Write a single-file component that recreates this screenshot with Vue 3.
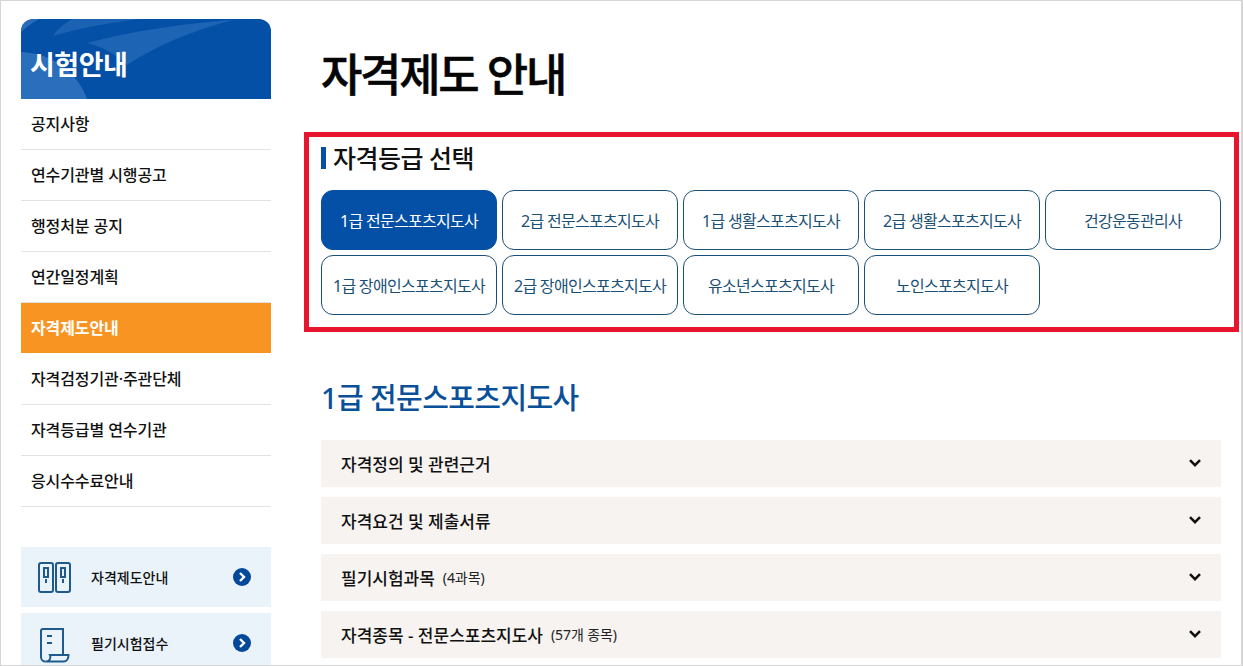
<script setup>
const menu = [
  { label: '공지사항' },
  { label: '연수기관별 시행공고' },
  { label: '행정처분 공지' },
  { label: '연간일정계획' },
  { label: '자격제도안내', active: true },
  { label: '자격검정기관·주관단체' },
  { label: '자격등급별 연수기관' },
  { label: '응시수수료안내' },
]
const grades = [
  { label: '1급 전문스포츠지도사', active: true },
  { label: '2급 전문스포츠지도사' },
  { label: '1급 생활스포츠지도사' },
  { label: '2급 생활스포츠지도사' },
  { label: '건강운동관리사' },
  { label: '1급 장애인스포츠지도사' },
  { label: '2급 장애인스포츠지도사' },
  { label: '유소년스포츠지도사' },
  { label: '노인스포츠지도사' },
]
const rows = [
  { label: '자격정의 및 관련근거' },
  { label: '자격요건 및 제출서류' },
  { label: '필기시험과목', note: '(4과목)' },
  { label: '자격종목 - 전문스포츠지도사', note: '(57개 종목)' },
]
</script>

<template>
  <div class="frame">
    <aside class="side">
      <div class="side-head">
        <svg class="swoosh" viewBox="0 0 250 80" preserveAspectRatio="none" aria-hidden="true">
          <path d="M0 13 C 6 8 12 3 18 0 L 12 0 Q 2 2 0 10 Z" fill="#2a6cba" />
          <path d="M32 17 C 36 10 44 4 52 0 L 118 0 C 88 4 58 9 32 17 Z" fill="#1c62b3" />
          <path d="M66 24 C 110 12 165 4 212 1 C 170 12 135 27 106 46 C 96 36 82 28 66 24 Z" fill="#1e64b4" />
          <path d="M0 33 C 30 34 56 52 66 80 L 0 80 Z" fill="#2b6ebc" />
        </svg>
        <h2 class="side-title">시험안내</h2>
      </div>
      <ul class="menu">
        <li v-for="item in menu" :key="item.label" class="menu-item" :class="{ active: item.active }">{{ item.label }}</li>
      </ul>
      <div class="cards">
        <div class="card">
          <svg class="card-icon" viewBox="0 0 34 40" aria-hidden="true">
            <g fill="none" stroke="#1f5a8c" stroke-width="2">
              <rect x="1" y="6" width="14" height="29" rx="2" />
              <rect x="18" y="6" width="14" height="29" rx="2" />
              <rect x="6" y="11" width="4" height="9" />
              <rect x="23" y="11" width="4" height="9" />
              <path d="M8 22v4M25 22v4" />
            </g>
          </svg>
          <span class="card-label">자격제도안내</span>
          <svg class="card-arrow" viewBox="0 0 18 18" aria-hidden="true">
            <circle cx="9" cy="9" r="9" fill="#04489a" />
            <path d="M7 5l4 4-4 4" fill="none" stroke="#fff" stroke-width="2.4" />
          </svg>
        </div>
        <div class="card">
          <svg class="card-icon" viewBox="0 0 34 40" aria-hidden="true">
            <g fill="none" stroke="#1f5a8c" stroke-width="2">
              <path d="M3 8a2 2 0 0 1 2-2H25V31" />
              <path d="M3 8V34a4.5 4.5 0 0 0 4.5 4.5" />
              <path d="M7.500 38.500a4.500 4.500 0 0 0 4.500-6.500H30.500c0 3-1.500 6.500-5 6.500z" />
              <path d="M9 13h5M9 20h5" />
            </g>
          </svg>
          <span class="card-label">필기시험접수</span>
          <svg class="card-arrow" viewBox="0 0 18 18" aria-hidden="true">
            <circle cx="9" cy="9" r="9" fill="#04489a" />
            <path d="M7 5l4 4-4 4" fill="none" stroke="#fff" stroke-width="2.4" />
          </svg>
        </div>
      </div>
    </aside>

    <main class="main">
      <h1 class="title">자격제도 안내</h1>
      <section class="select-box">
        <h3 class="select-title">자격등급 선택</h3>
        <div class="grade-grid">
          <div v-for="g in grades" :key="g.label" class="grade" :class="{ active: g.active }">{{ g.label }}</div>
        </div>
      </section>
      <h2 class="sub-title">1급 전문스포츠지도사</h2>
      <div class="rows">
        <div v-for="r in rows" :key="r.label" class="row">
          <span class="row-label">{{ r.label }}</span>
          <span v-if="r.note" class="row-note">{{ r.note }}</span>
          <svg class="chevron" viewBox="0 0 12 8" aria-hidden="true">
            <path d="M1 1.200l5 5 5-5" fill="none" stroke="#111" stroke-width="2.500" />
          </svg>
        </div>
      </div>
    </main>
  </div>
</template>

<style>
html, body { margin: 0; background: #fff; overflow: hidden; }
</style>

<style scoped>
.frame {
  box-sizing: border-box;
  width: 1243px;
  height: 666px;
  border: 1px solid #d6d6d6;
  border-right-width: 2px;
  padding: 18px 0 0 20px;
  display: flex;
  overflow: hidden;
  background: #fff;
  font-family: "Noto Sans", "Noto Sans CJK KR", sans-serif;
  color: #111;
}
.side { width: 250px; flex: none; }
.side-head {
  position: relative;
  height: 80px;
  background: #0450a6;
  border-radius: 12px 12px 0 0;
  overflow: hidden;
}
.swoosh { position: absolute; inset: 0; width: 100%; height: 100%; }
.side-title {
  position: relative;
  margin: 0;
  padding: 26px 0 0 9px;
  font-size: 27px;
  line-height: 40px;
  font-weight: 700;
  letter-spacing: -0.5px;
  color: #fff;
}
.menu { list-style: none; margin: 0; padding: 0; }
.menu-item {
  box-sizing: border-box;
  height: 51px;
  padding-left: 10px;
  border-bottom: 1px solid #e2e2e2;
  font-size: 16px;
  line-height: 51px;
  font-weight: 500;
  letter-spacing: -0.1px;
  color: #111;
}
.menu-item.active { background: #f89522; color: #fff; border-bottom-color: #fff; font-weight: 700; }
.cards { margin-top: 40px; display: flex; flex-direction: column; gap: 6px; }
.card {
  flex: none;
  height: 60px;
  display: flex;
  align-items: center;
  background: #e9f3f9;
  padding: 0 20px 0 17px;
}
.card-icon { width: 34px; height: 40px; flex: none; }
.card-label {
  margin-left: 19px;
  flex: 1;
  font-size: 14px;
  letter-spacing: 0;
  font-weight: 500;
}
.card-arrow { width: 18px; height: 18px; flex: none; }

.main { width: 900px; margin-left: 50px; flex: none; }
.title {
  margin: 22px 0 0;
  font-size: 45px;
  line-height: 68px;
  font-weight: 500;
  letter-spacing: -2.3px;
  -webkit-text-stroke: 0.5px #050505;
  color: #050505;
}
.select-box {
  box-sizing: border-box;
  width: 935px;
  height: 200px;
  margin: 23px 0 0 -17px;
  padding: 5px 12px 0 12px;
  border: 5px solid #e8152f;
}
.select-title {
  margin: 0;
  padding-left: 12px;
  position: relative;
  font-size: 25px;
  line-height: 32px;
  font-weight: 500;
  letter-spacing: -0.5px;
  color: #111;
}
.select-title::before {
  content: "";
  position: absolute;
  left: 0;
  top: 5px;
  width: 5px;
  height: 22px;
  background: #0450a6;
}
.grade-grid {
  margin-top: 16px;
  width: 900px;
  display: grid;
  grid-template-columns: repeat(5, 176px);
  grid-auto-rows: 60px;
  gap: 5px;
}
.grade {
  box-sizing: border-box;
  display: flex;
  align-items: center;
  justify-content: center;
  padding-bottom: 1px;
  border: 1px solid #1a5076;
  border-radius: 12px;
  font-size: 16px;
  letter-spacing: -0.7px;
  color: #1a5076;
}
.grade.active { background: #0450a6; border-color: #0450a6; color: #fff; }
.sub-title {
  margin: 44px 0 0;
  font-size: 29px;
  line-height: 44px;
  font-weight: 500;
  letter-spacing: -0.6px;
  color: #0a5099;
}
.rows { margin-top: 20px; display: flex; flex-direction: column; gap: 10px; }
.row {
  box-sizing: border-box;
  flex: none;
  height: 47px;
  display: flex;
  align-items: center;
  padding: 0 20px 1px;
  background: #f6f3f0;
}
.row-label { font-size: 17px; font-weight: 500; letter-spacing: 0; color: #111; }
.row-note { margin-left: 8px; font-size: 14px; letter-spacing: -0.1px; color: #222; }
.chevron { width: 12px; height: 8px; margin-left: auto; flex: none; margin-bottom: 1px; }
</style>
